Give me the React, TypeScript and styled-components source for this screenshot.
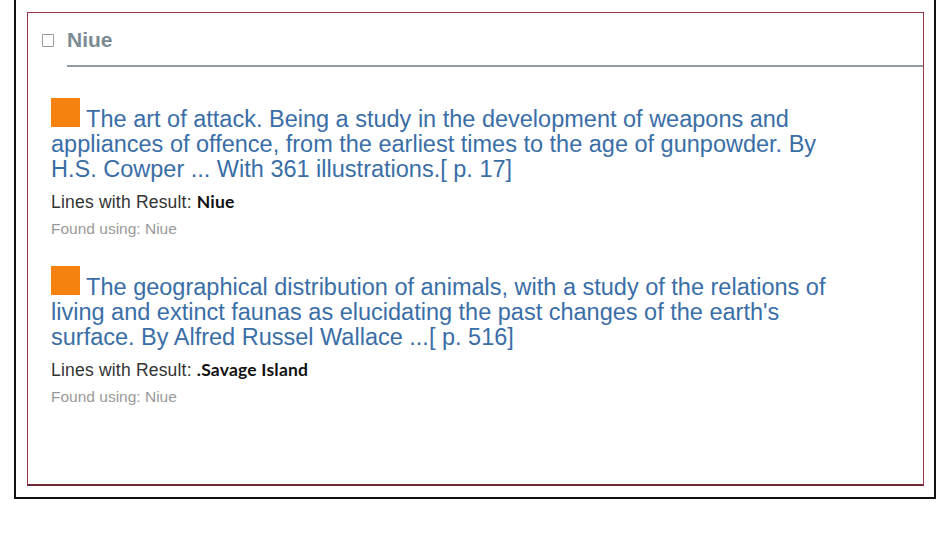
import React from 'react';
import styled, {createGlobalStyle} from 'styled-components';

const GlobalStyle = createGlobalStyle`
  html, body {
    margin: 0;
    background: #fff;
  }
  body {
    font-family: "Liberation Sans", Arial, sans-serif;
  }
`;

const Frame = styled.div`
  box-sizing: border-box;
  margin-left: 14px;
  width: 922px;
  border: 2px solid #111;
  border-top: none;
  padding: 12px 10px 11px 11px;
`;

const Panel = styled.section`
  box-sizing: border-box;
  height: 474px;
  border: 1px solid #9e3444;
  border-bottom: 2px solid #6e2a34;
  background: #fff;
`;

const Header = styled.div`
  display: flex;
  align-items: center;
  padding: 15px 0 0 14px;
  height: 24px;
`;

const CheckBox = styled.span`
  display: inline-block;
  box-sizing: border-box;
  width: 12px;
  height: 13px;
  border: 1px solid #999;
  border-radius: 1px;
  background: #fff;
`;

const HeaderTitle = styled.h2`
  margin: 0 0 0 13px;
  font-size: 21px;
  line-height: 24px;
  font-weight: bold;
  color: #7b8a93;
`;

const Rule = styled.hr`
  margin: 13px 0 0 39px;
  height: 2px;
  border: none;
  background: #8e9ba0;
`;

const ResultList = styled.div`
  display: flex;
  flex-direction: column;
  gap: 28px;
  width: 800px;
  padding: 31px 0 0 23px;
`;

const Result = styled.article`
  display: flex;
  flex-direction: column;
`;

const TitleLink = styled.a`
  font-size: 23.5px;
  line-height: 25px;
  color: #3a6ea7;
  text-decoration: none;
  cursor: pointer;
`;

const Marker = styled.span`
  display: inline-block;
  width: 29px;
  height: 29px;
  background: #f5820f;
  vertical-align: baseline;
`;

const MatchLine = styled.div`
  margin-top: 10px;
  font-size: 17.5px;
  line-height: 20px;
  letter-spacing: 0.2px;
  color: #333;
`;

const MatchTerm = styled.b`
  font-family: Lato, "Open Sans", sans-serif;
  font-weight: 700;
  color: #111;
`;

const FoundLine = styled.div`
  margin-top: 8px;
  font-size: 15.5px;
  line-height: 18px;
  color: #9a9a9a;
`;

type Item = {
  title: string;
  match: string;
  found: string;
};

const items: Item[] = [
  {
    title:
      'The art of attack. Being a study in the development of weapons and appliances of offence, from the earliest times to the age of gunpowder. By H.S. Cowper ... With 361 illustrations.[ p. 17]',
    match: 'Niue',
    found: 'Niue',
  },
  {
    title:
      "The geographical distribution of animals, with a study of the relations of living and extinct faunas as elucidating the past changes of the earth's surface. By Alfred Russel Wallace ...[ p. 516]",
    match: '.Savage Island',
    found: 'Niue',
  },
];

export default function App() {
  return (
    <>
      <GlobalStyle />
      <Frame>
        <Panel>
          <Header>
            <CheckBox />
            <HeaderTitle>Niue</HeaderTitle>
          </Header>
          <Rule />
          <ResultList>
            {items.map(item => (
              <Result key={item.title}>
                <TitleLink>
                  <Marker /> {item.title}
                </TitleLink>
                <MatchLine>
                  Lines with Result: <MatchTerm>{item.match}</MatchTerm>
                </MatchLine>
                <FoundLine>Found using: {item.found}</FoundLine>
              </Result>
            ))}
          </ResultList>
        </Panel>
      </Frame>
    </>
  );
}
